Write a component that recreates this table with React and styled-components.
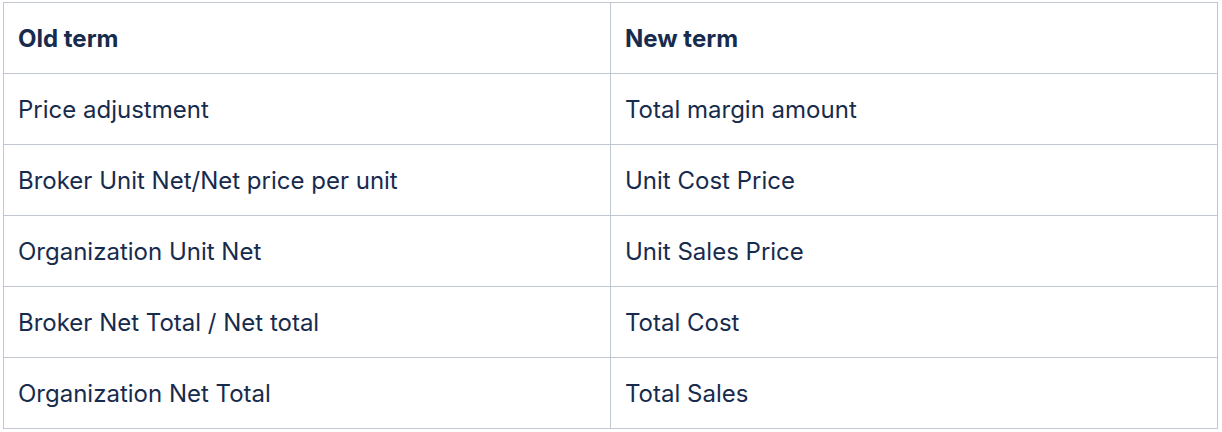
import styled, { createGlobalStyle } from "styled-components";

const GlobalStyle = createGlobalStyle`
  body {
    margin: 0;
    background: #ffffff;
    font-family: Inter, "Noto Sans", sans-serif;
  }
`;

const Wrapper = styled.div`
  padding: 2px 4px 0 3px;
`;

const Table = styled.table`
  width: 100%;
  border-collapse: collapse;
  table-layout: fixed;
  color: #172b4d;
  font-size: 24px;
`;

const Cell = styled.td`
  height: 71px;
  box-sizing: border-box;
  padding: 1px 14px 0;
  border: 1px solid #c1c7d0;
  font-weight: ${(p) => (p.$head ? 700 : 400)};
  text-align: left;
  vertical-align: middle;
`;

const rows = [
  ["Price adjustment", "Total margin amount"],
  ["Broker Unit Net/Net price per unit", "Unit Cost Price"],
  ["Organization Unit Net", "Unit Sales Price"],
  ["Broker Net Total / Net total", "Total Cost"],
  ["Organization Net Total", "Total Sales"],
];

export default function App() {
  return (
    <>
      <GlobalStyle />
      <Wrapper>
        <Table>
          <thead>
            <tr>
              <Cell as="th" $head>Old term</Cell>
              <Cell as="th" $head>New term</Cell>
            </tr>
          </thead>
          <tbody>
            {rows.map(([oldTerm, newTerm]) => (
              <tr key={oldTerm}>
                <Cell>{oldTerm}</Cell>
                <Cell>{newTerm}</Cell>
              </tr>
            ))}
          </tbody>
        </Table>
      </Wrapper>
    </>
  );
}
